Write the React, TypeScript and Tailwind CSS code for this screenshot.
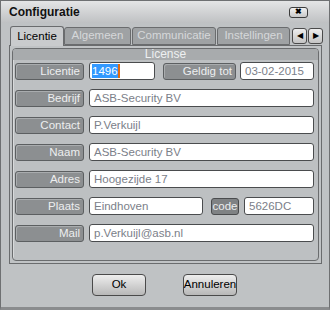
import React from 'react';

const font = { fontFamily: '"Liberation Sans", Arial, sans-serif' };

function Label({ text, className = '' }: { text: string; className?: string }) {
  return (
    <div
      className={`h-[17px] shrink-0 rounded-[3px] border border-[#5c5f61] bg-[#8c8f91] pr-[3px] text-right text-[11.5px] leading-[15px] text-[#eceeef] shadow-[inset_1px_1px_0_#a9acae] ${className}`}
    >
      {text}
    </div>
  );
}

function Field({ value, className = '' }: { value: string; className?: string }) {
  return (
    <div
      className={`h-[18px] rounded-[3px] border border-[#4a4c4e] bg-white pl-[4px] text-[11.5px] leading-[16px] text-[#7b8089] ${className}`}
    >
      {value}
    </div>
  );
}

export default function App() {
  const rows = [
    { label: 'Bedrijf', value: 'ASB-Security BV' },
    { label: 'Contact', value: 'P.Verkuijl' },
    { label: 'Naam', value: 'ASB-Security BV' },
    { label: 'Adres', value: 'Hoogezijde 17' },
  ];

  return (
    <div className="h-[310px] w-[330px] overflow-hidden bg-[#bfc2c4]" style={font}>
      <div className="flex h-[310px] flex-col border border-[#6e7072] border-b-[3px] border-b-[#8a8c8e]">
        {/* title bar */}
        <div className="flex h-[22px] items-center justify-between bg-gradient-to-b from-[#e4e5e6] to-[#bfc1c3] pl-[8px] pr-[21px]">
          <span className="text-[12px] font-bold text-[#111]">Configuratie</span>
          <div className="flex h-[11px] w-[19px] items-center justify-center rounded-[3px] border border-[#3c3c3c] bg-gradient-to-b from-[#f2f2f2] to-[#c8c8c8] text-[8px] font-bold leading-none text-black">
            ✖
          </div>
        </div>

        {/* tabs */}
        <div className="mt-[3px] flex h-[19px] items-end pl-[9px]">
          <div className="z-10 -mb-px flex h-[20px] w-[54px] items-center justify-center rounded-t-[3px] border border-b-0 border-[#6a6c6e] bg-[#c9cbcd] text-[11.5px] text-black">
            Licentie
          </div>
          {['Algemeen', 'Communicatie', 'Instellingen'].map((t, i) => (
            <div
              key={t}
              className={`flex h-[18px] items-center justify-center rounded-t-[3px] border border-[#6a6c6e] bg-[#9fa2a4] text-[11.5px] text-[#d6d8da] ${
                i === 0 ? 'w-[67px]' : i === 1 ? 'ml-px w-[84px]' : 'ml-px w-[73px]'
              }`}
            >
              {t}
            </div>
          ))}
          <div className="ml-[2px] flex gap-px pb-px">
            <div className="flex h-[16px] w-[15px] items-center justify-center rounded-[3px] border border-[#4a4a4a] bg-gradient-to-b from-[#eeeeee] to-[#c4c4c4] text-[8px] leading-none text-black">
              ◀
            </div>
            <div className="flex h-[16px] w-[15px] items-center justify-center rounded-[3px] border border-[#4a4a4a] bg-gradient-to-b from-[#eeeeee] to-[#c4c4c4] text-[8px] leading-none text-black">
              ▶
            </div>
          </div>
        </div>

        {/* tab panel */}
        <div className="ml-[8px] mr-[7px] h-[219px] border border-[#6a6c6e] bg-[#c0c3c5] p-[2px]">
          <div className="flex h-full flex-col rounded-[4px] border border-[#6a6c6e] bg-[#bdc0c2] shadow-[inset_1px_1px_0_#d8dadb]">
            <div className="h-[11px] rounded-t-[3px] bg-[#a8abad] text-center text-[12px] leading-[10px] text-[#eef0f1]">
              License
            </div>
            <div className="flex flex-col gap-[9px] pl-[2px] pr-[4px] pt-[2px]">
              <div className="flex items-center">
                <Label text="Licentie" className="w-[69px]" />
                <div className="ml-[5px] flex h-[18px] w-[66px] items-center rounded-[3px] border border-[#4a4c4e] bg-white pl-[2px]">
                  <span className="bg-[#3399ff] text-[11.5px] leading-[14px] text-white">1496</span>
                  <span className="h-[14px] w-[2px] bg-[#e06a10]" />
                </div>
                <Label text="Geldig tot" className="ml-[8px] w-[73px]" />
                <Field value="03-02-2015" className="ml-[4px] flex-1" />
              </div>
              {rows.map((r) => (
                <div key={r.label} className="flex items-center">
                  <Label text={r.label} className="w-[69px]" />
                  <Field value={r.value} className="ml-[5px] flex-1" />
                </div>
              ))}
              <div className="flex items-center">
                <Label text="Plaats" className="w-[69px]" />
                <Field value="Eindhoven" className="ml-[5px] w-[114px]" />
                <div className="ml-[8px] h-[17px] w-[28px] shrink-0 rounded-[3px] border border-[#4a4c4e] bg-[#7f8284] text-center text-[11.5px] leading-[15px] text-[#eceeef]">
                  code
                </div>
                <Field value="5626DC" className="ml-[5px] flex-1" />
              </div>
              <div className="flex items-center">
                <Label text="Mail" className="w-[69px]" />
                <Field value="p.Verkuijl@asb.nl" className="ml-[5px] flex-1" />
              </div>
            </div>
          </div>
        </div>

        {/* buttons */}
        <div className="mt-[10px] flex pl-[91px]">
          <div className="flex h-[22px] w-[54px] items-center justify-center rounded-[4px] border border-[#4a4a4a] bg-gradient-to-b from-[#eeeeee] to-[#b8b8b8] text-[11.5px] text-black">
            Ok
          </div>
          <div className="ml-[37px] flex h-[22px] w-[54px] items-center justify-center rounded-[4px] border border-[#4a4a4a] bg-gradient-to-b from-[#eeeeee] to-[#b8b8b8] text-[11.5px] text-black">
            Annuleren
          </div>
        </div>
      </div>
    </div>
  );
}
